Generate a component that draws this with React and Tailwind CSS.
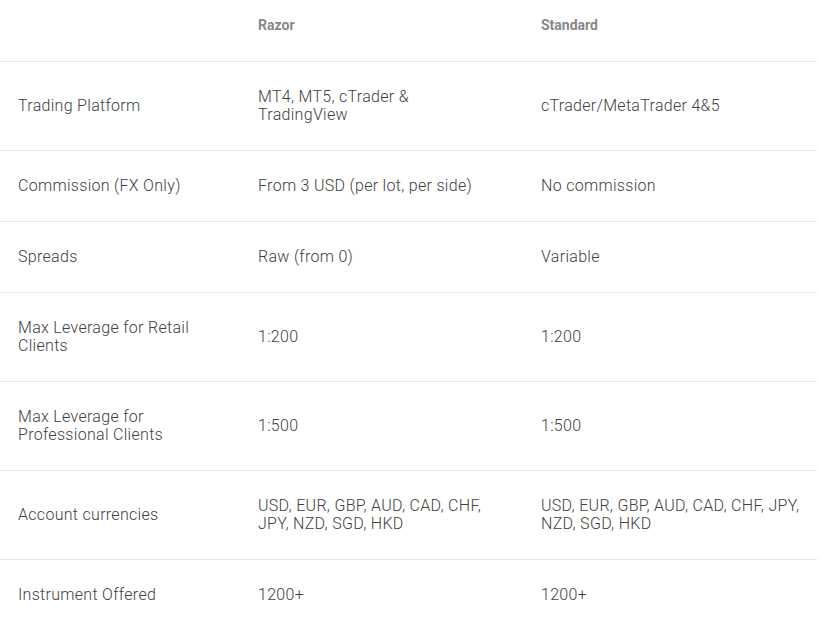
const rows = [
  { label: 'Trading Platform', razor: 'MT4, MT5, cTrader & TradingView', standard: 'cTrader/MetaTrader 4&5', tall: true },
  { label: 'Commission (FX Only)', razor: 'From 3 USD (per lot, per side)', standard: 'No commission' },
  { label: 'Spreads', razor: 'Raw (from 0)', standard: 'Variable' },
  { label: 'Max Leverage for Retail Clients', razor: '1:200', standard: '1:200', tall: true },
  { label: 'Max Leverage for Professional Clients', razor: '1:500', standard: '1:500', tall: true },
  { label: 'Account currencies', razor: 'USD, EUR, GBP, AUD, CAD, CHF, JPY, NZD, SGD, HKD', standard: 'USD, EUR, GBP, AUD, CAD, CHF, JPY, NZD, SGD, HKD', tall: true },
  { label: 'Instrument Offered', razor: '1200+', standard: '1200+' },
];

const App = () => {
  return (
    <div className="bg-white min-h-screen" style={{ fontFamily: 'Roboto, "Liberation Sans", sans-serif' }}>
      <table className="w-[817px] table-fixed border-collapse">
        <colgroup>
          <col className="w-[240px]" />
          <col className="w-[283px]" />
          <col className="w-[294px]" />
        </colgroup>
        <thead>
          <tr className="border-b border-[#e6e6ea]">
            <th className="h-[61px] pl-[18px] text-left" />
            <th className="h-[61px] pl-[18px] pt-[16px] pb-[27px] text-left align-top text-[14px] leading-[18px] font-bold text-[#888888]">Razor</th>
            <th className="h-[61px] pl-[18px] pt-[16px] pb-[27px] text-left align-top text-[14px] leading-[18px] font-bold text-[#888888]">Standard</th>
          </tr>
        </thead>
        <tbody className="text-[16px] leading-[18px] font-light tracking-[0.3px] text-[#404040]">
          {rows.map((row) => (
            <tr key={row.label} className="border-b border-[#e6e6ea]">
              <td className={`pl-[18px] pr-[40px] align-middle ${row.tall ? 'h-[89px]' : 'h-[71px]'}`}>{row.label}</td>
              <td className="pl-[18px] pr-[30px] align-middle">{row.razor}</td>
              <td className="pl-[18px] pr-[6px] align-middle">{row.standard}</td>
            </tr>
          ))}
        </tbody>
      </table>
    </div>
  );
};

export default App;
